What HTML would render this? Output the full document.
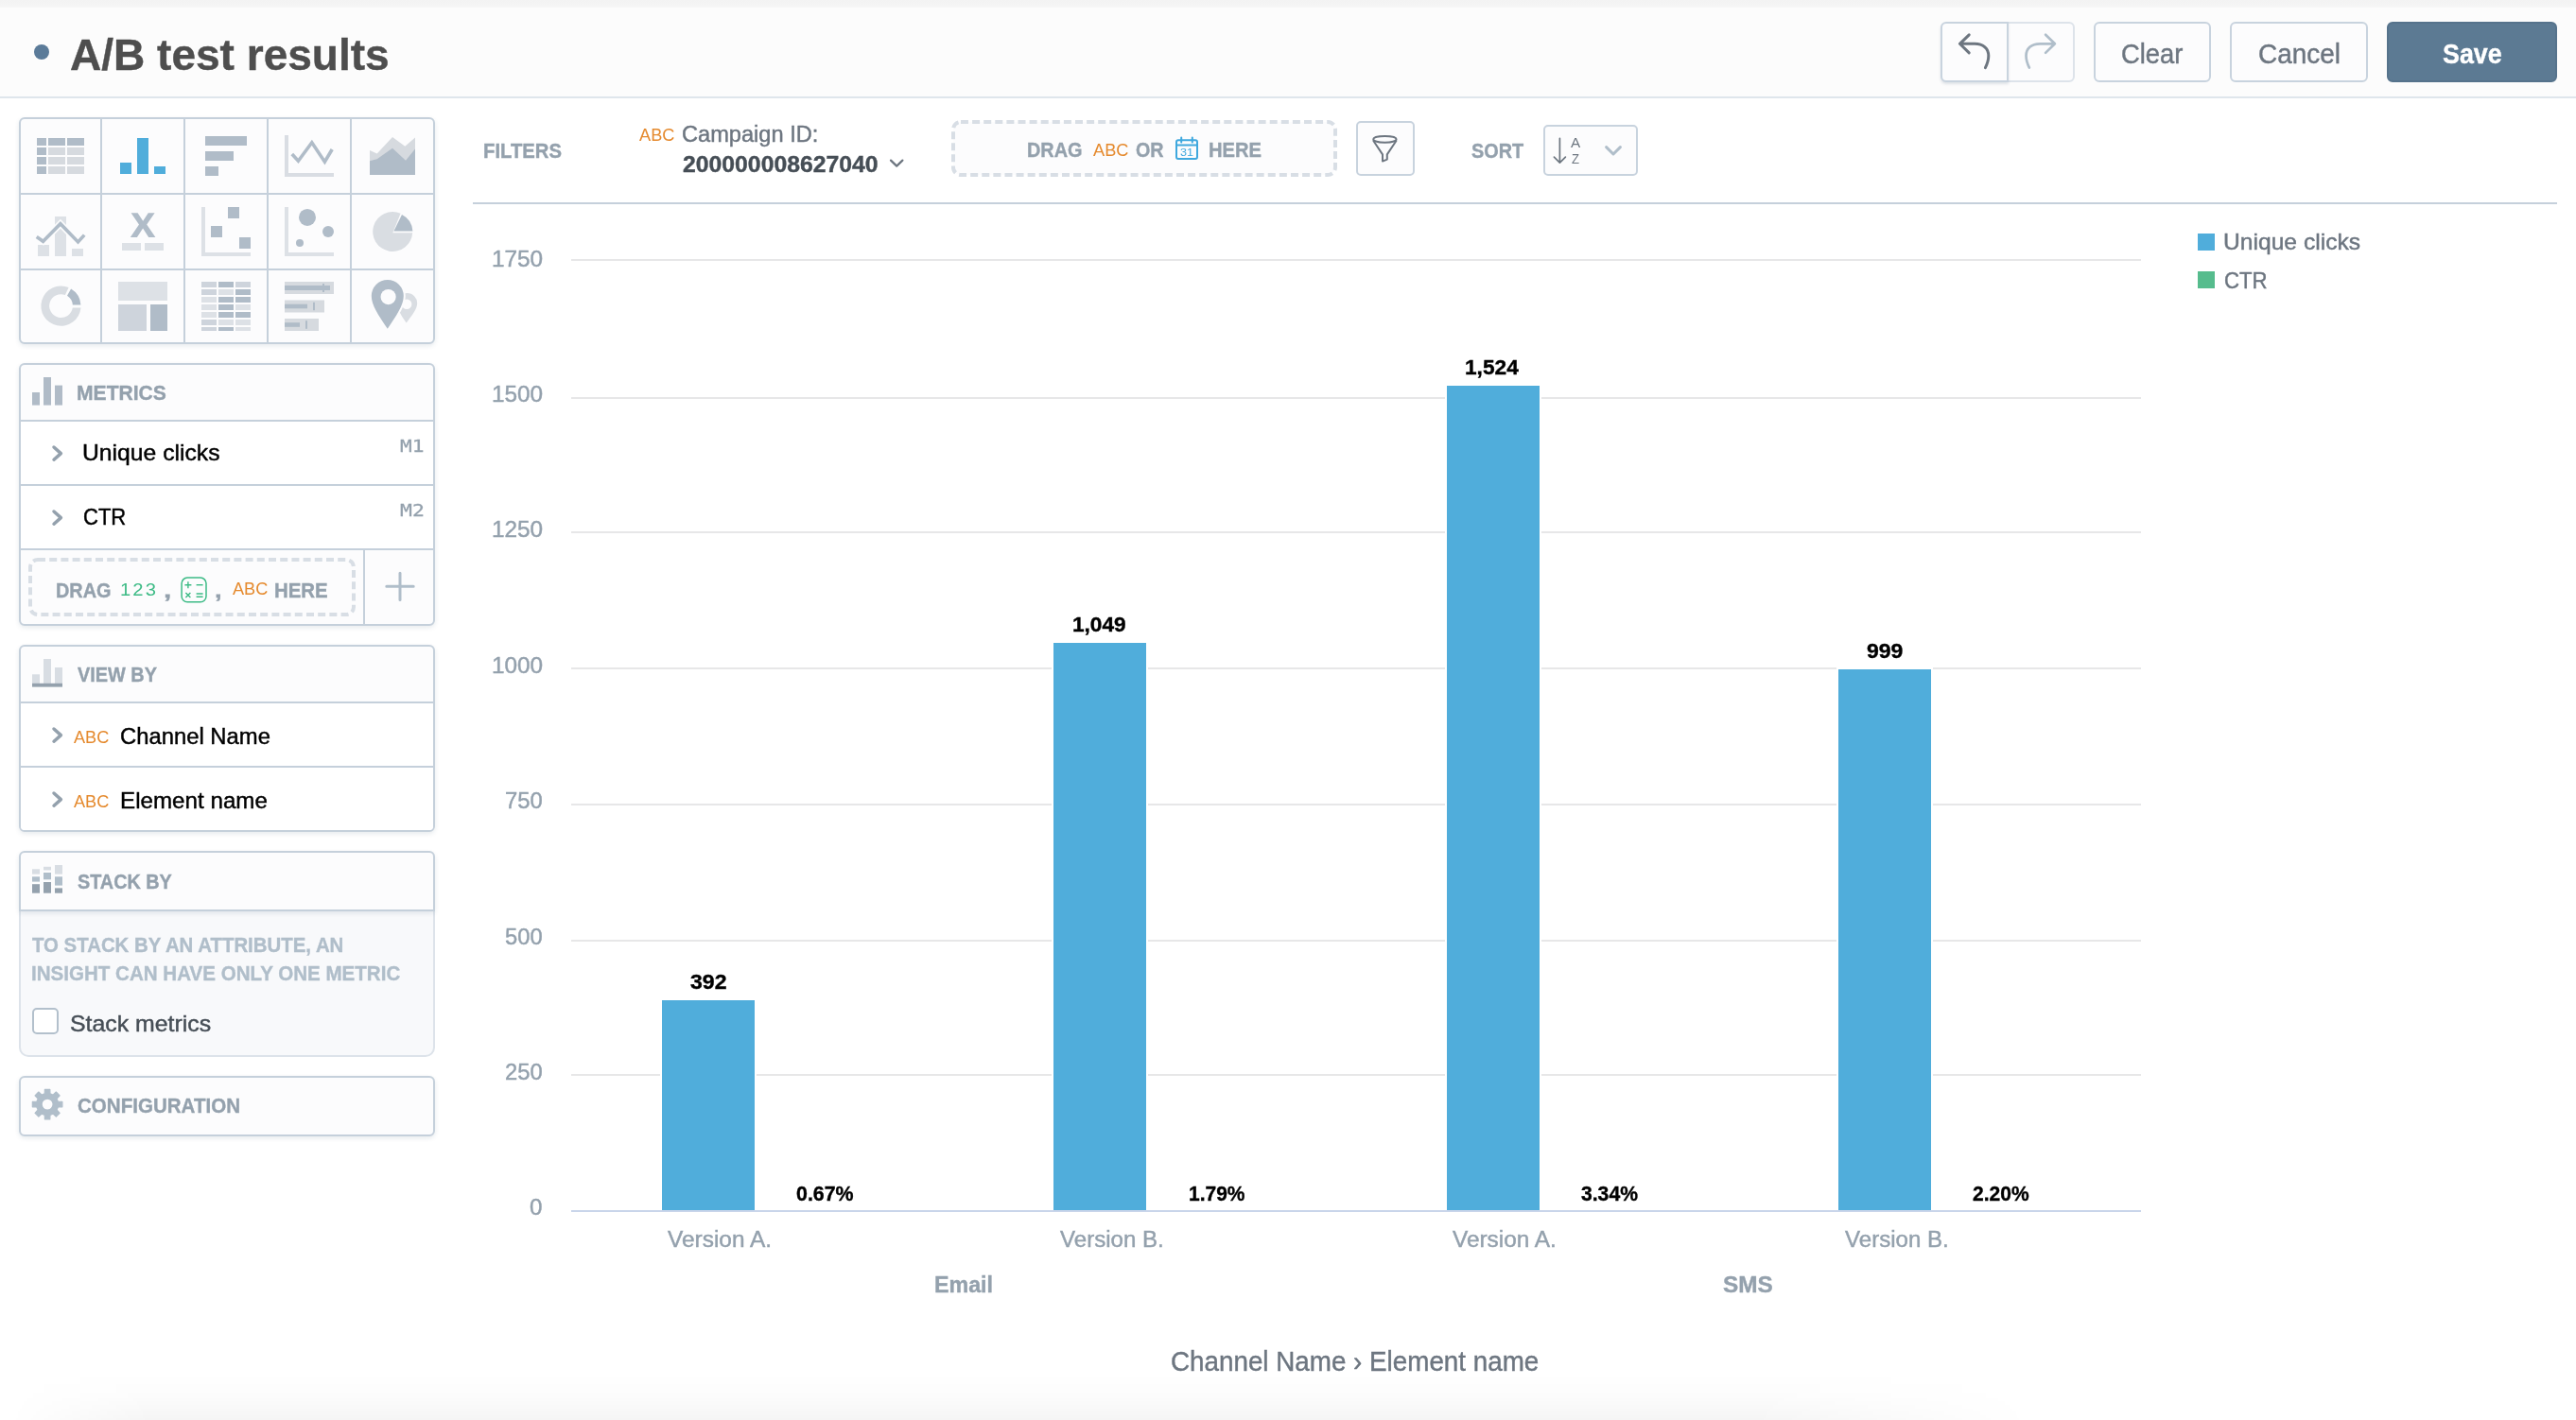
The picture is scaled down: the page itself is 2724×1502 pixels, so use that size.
<!DOCTYPE html>
<html lang="en"><head><meta charset="utf-8"><title>A/B test results</title>
<style>
html,body{margin:0;padding:0}
body{width:2724px;height:1502px;position:relative;overflow:hidden;background:#fff;font-family:'Liberation Sans',sans-serif}
.t{position:absolute;white-space:nowrap;line-height:1;transform-origin:0 0;z-index:5}
.b{position:absolute;box-sizing:border-box}
svg{position:absolute;overflow:visible}
header,aside,main,section,nav{display:block;position:static}
.strip{left:0;top:0;width:2724px;height:9px;background:linear-gradient(#f3f3f3,#f5f5f5 70%,#fafafa)}
.hdr{left:0;top:8px;width:2724px;height:96px;background:#fcfcfc;border-bottom:2px solid #dfe6ec}
.btn{top:23px;height:64px;border:2px solid #c8d3de;border-radius:6px;background:#fcfcfd}
.btn.dis{border-color:#dde3ea;border-radius:0 6px 6px 0}
.btn.sh{border-radius:6px 0 0 6px;box-shadow:0 2px 3px rgba(20,56,93,.13)}
.btn.save{background:#5c7a93;border-color:#56738c}
.panel{left:20px;width:440px;border:2px solid #c5d0db;border-radius:6px;background:#fcfcfd;box-shadow:0 2px 5px rgba(20,56,93,.10)}
.row{left:22px;width:436px;background:#fff}
.hl{left:22px;width:436px;height:2px;background:#c5d0db}
.vl{width:2px;background:#c5d0db}
.bullet{left:36px;top:47px;width:16px;height:16px;border-radius:50%;background:#5b7b99}
.fbtn{border:2px solid #c8d3de;border-radius:5px;background:#fcfcfd}
.chk{left:34px;top:1066px;width:28px;height:28px;border:2px solid #b3c0cc;border-radius:5px;background:#fff}
.fade{left:0;top:1452px;width:2200px;height:50px;background:linear-gradient(to bottom,rgba(0,0,0,0),rgba(0,0,0,.012) 50%,rgba(0,0,0,.04));-webkit-mask-image:linear-gradient(to right,rgba(0,0,0,0) 10px,#000 160px,#000 1850px,rgba(0,0,0,0) 2150px);mask-image:linear-gradient(to right,rgba(0,0,0,0) 10px,#000 160px,#000 1850px,rgba(0,0,0,0) 2150px)}
</style></head>
<body>
<div class="b strip"></div>
<header>
<div class="b hdr"></div>
<div class="b bullet"></div>
<div class="b btn dis" style="left:2122px;width:72px"></div>
<div class="b btn sh" style="left:2052px;width:72px"></div>
<div class="b btn" style="left:2214px;width:124px"></div>
<div class="b btn" style="left:2358px;width:146px"></div>
<div class="b btn save" style="left:2524px;width:180px"></div>
<svg style="left:2040px;top:14px" width="170" height="82" viewBox="2040 14 170 82" fill="none" stroke-linecap="round" stroke-linejoin="round">
<path d="M2082.2 36.8 L2072.4 46.3 L2082.2 55.9 M2072.8 46.3 H2088 C2097.5 46.3 2102.8 51.5 2102.8 59 C2102.8 63.5 2101.4 67.6 2099.4 71.6" stroke="#6d7680" stroke-width="3"/>
<path d="M2163.1 36.8 L2172.9 46.3 L2163.1 55.9 M2172.5 46.3 H2157.3 C2147.8 46.3 2142.5 51.5 2142.5 59 C2142.5 63.5 2143.9 67.6 2145.9 71.6" stroke="#b0beca" stroke-width="2.7"/>
</svg>
<span class="t" id="t0" style="left:73.60px;top:35.19px;font:700 46.97px/1 'Liberation Sans',sans-serif;color:#4e4e4e;-webkit-text-stroke:0.4px;transform:scaleX(0.9802);">A/B test results</span>
<span class="t" id="t1" style="left:2242.75px;top:41.99px;font:400 29.96px/1 'Liberation Sans',sans-serif;color:#6d7680;-webkit-text-stroke:0.45px;transform:scaleX(0.9143);">Clear</span>
<span class="t" id="t2" style="left:2387.72px;top:41.99px;font:400 29.96px/1 'Liberation Sans',sans-serif;color:#6d7680;-webkit-text-stroke:0.45px;transform:scaleX(0.9318);">Cancel</span>
<span class="t" id="t3" style="left:2582.76px;top:41.99px;font:700 29.96px/1 'Liberation Sans',sans-serif;color:#ffffff;-webkit-text-stroke:0.4px;transform:scaleX(0.8954);">Save</span>
</header>
<aside>
<section>
<div class="b panel" style="top:124px;height:240px"></div>
<div class="b vl" style="left:106px;top:126px;height:236px"></div>
<div class="b vl" style="left:194px;top:126px;height:236px"></div>
<div class="b vl" style="left:282px;top:126px;height:236px"></div>
<div class="b vl" style="left:370px;top:126px;height:236px"></div>
<div class="b hl" style="top:204px"></div>
<div class="b hl" style="top:284px"></div>
<svg style="left:0;top:0" width="480" height="370" viewBox="0 0 480 370">
<!-- table -->
<g fill="#b0bcc8"><rect x="39" y="146" width="10" height="8"/><rect x="51" y="146" width="18" height="8"/><rect x="71" y="146" width="18" height="8"/><rect x="39" y="156" width="10" height="8"/><rect x="39" y="166" width="10" height="8"/><rect x="39" y="176" width="10" height="8"/></g>
<g fill="#d6dadf"><rect x="51" y="156" width="18" height="8"/><rect x="71" y="156" width="18" height="8"/><rect x="51" y="166" width="18" height="8"/><rect x="71" y="166" width="18" height="8"/><rect x="51" y="176" width="18" height="8"/><rect x="71" y="176" width="18" height="8"/></g>
<!-- column (active) -->
<g fill="#50addb"><rect x="127" y="172" width="12" height="12"/><rect x="145" y="146" width="12" height="38"/><rect x="163" y="176" width="12" height="8"/></g>
<!-- bar -->
<g fill="#b0bcc8"><rect x="217" y="144" width="44" height="10"/><rect x="217" y="160" width="30" height="10"/><rect x="217" y="176" width="14" height="10"/></g>
<!-- line -->
<path d="M301 143 H305 V183 H353 V187 H301 Z" fill="#d9dde3"/>
<path d="M308.8 163.1 L315.4 170.2 L329.8 150.8 L343.4 171.2 L351.2 158" fill="none" stroke="#b0bcc8" stroke-width="3.6"/>
<!-- area -->
<path d="M391 159 L398.7 162.4 L415 145 L428.3 154.7 L439 145.6 V185 H391 Z" fill="#d6dadf"/>
<path d="M391 170.2 L398.7 168.2 L415 156.8 L429 169.8 L439 157.4 V185 H391 Z" fill="#b0bcc8"/>
<!-- combo -->
<g fill="#dde1e6"><rect x="40" y="259" width="12" height="12"/><rect x="58" y="229" width="12" height="42"/><rect x="76" y="263" width="12" height="8"/></g>
<path d="M38.7 250.5 L45.6 255.3 L63.9 236.7 L82.5 255.9 L89.2 248.6" fill="none" stroke="#fcfcfd" stroke-width="7"/>
<path d="M38.7 250.5 L45.6 255.3 L63.9 236.7 L82.5 255.9 L89.2 248.6" fill="none" stroke="#b0bcc8" stroke-width="3.6"/>
<!-- headline -->
<path d="M137.8 251 L147 237.6 L138.6 225.2 H145.6 L151.2 233.8 L156.8 225.2 H163.6 L155.2 237.6 L164.4 251 H157.2 L151.1 241.6 L144.9 251 Z" fill="#b0bcc8"/>
<g fill="#dde1e6"><rect x="129" y="257" width="20" height="8"/><rect x="153" y="257" width="20" height="8"/></g>
<!-- scatter -->
<path d="M213 219 H217 V267 H265 V271 H213 Z" fill="#dde1e6"/>
<g fill="#b0bcc8"><rect x="241" y="219" width="12" height="12"/><rect x="223" y="239" width="12" height="12"/><rect x="253" y="251" width="12" height="12"/></g>
<!-- bubble -->
<path d="M301 219 H305 V267 H353 V271 H301 Z" fill="#dde1e6"/>
<g fill="#b0bcc8"><circle cx="325" cy="229.9" r="9"/><circle cx="347" cy="245" r="6"/><circle cx="317" cy="256.9" r="4"/></g>
<!-- pie -->
<path d="M415.3 246.2 H436.2 A21 21 0 1 1 423.6 225.7 Z" fill="#d9dde2"/>
<path d="M416.4 244.6 L425 227 A21 21 0 0 1 436.4 244.6 Z" fill="#b0bcc8"/>
<!-- donut -->
<path d="M85.5 325.6 A21.1 21.1 0 1 1 72.6 304.1 L68.9 312 A12.4 12.4 0 1 0 76.8 325.6 Z" fill="#d9dde2"/>
<path d="M75.1 305.4 A21.1 21.1 0 0 1 85.4 322.6 H76.8 A12.4 12.4 0 0 0 71 312.8 Z" fill="#b0bcc8"/>
<!-- treemap -->
<rect x="125" y="298" width="52" height="20" fill="#dde1e6"/><rect x="125" y="322" width="30" height="28" fill="#ced4dc"/><rect x="159" y="322" width="18" height="28" fill="#b0bcc8"/>
<!-- heatmap -->
<rect x="213" y="298" width="16" height="6" fill="#ced4dc"/><rect x="231" y="298" width="16" height="6" fill="#b0bcc8"/><rect x="249" y="298" width="16" height="6" fill="#ced4dc"/><rect x="213" y="306" width="16" height="6" fill="#ced4dc"/><rect x="231" y="306" width="16" height="6" fill="#dde1e6"/><rect x="249" y="306" width="16" height="6" fill="#b0bcc8"/><rect x="213" y="314" width="16" height="6" fill="#dde1e6"/><rect x="231" y="314" width="16" height="6" fill="#b0bcc8"/><rect x="249" y="314" width="16" height="6" fill="#b0bcc8"/><rect x="213" y="322" width="16" height="6" fill="#dde1e6"/><rect x="231" y="322" width="16" height="6" fill="#b0bcc8"/><rect x="249" y="322" width="16" height="6" fill="#dde1e6"/><rect x="213" y="330" width="16" height="6" fill="#dde1e6"/><rect x="231" y="330" width="16" height="6" fill="#b0bcc8"/><rect x="249" y="330" width="16" height="6" fill="#b0bcc8"/><rect x="213" y="338" width="16" height="6" fill="#ced4dc"/><rect x="231" y="338" width="16" height="6" fill="#dde1e6"/><rect x="249" y="338" width="16" height="6" fill="#dde1e6"/><rect x="213" y="346" width="16" height="4" fill="#ced4dc"/><rect x="231" y="346" width="16" height="4" fill="#b0bcc8"/><rect x="249" y="346" width="16" height="4" fill="#dde1e6"/>
<!-- bullet -->
<g fill="#d6dadf"><rect x="301" y="298" width="52" height="13"/><rect x="301" y="317.5" width="42" height="13"/><rect x="301" y="337" width="36" height="13"/></g>
<g fill="#b0bcc8"><rect x="301" y="302" width="48" height="5"/><rect x="341" y="300" width="2" height="9"/><rect x="301" y="321.7" width="24" height="4.6"/><rect x="331" y="319.8" width="2" height="8.4"/><rect x="301" y="341.2" width="16" height="4.6"/><rect x="323" y="339.2" width="2" height="8.6"/></g>
<!-- geo pushpin -->
<path d="M429.7 341.6 C424 333 420 327 420 320.7 A10.6 10.6 0 0 1 441.2 320.7 C441.2 327 435.5 333.5 429.7 341.6 Z M430.1 327 A5.3 5.3 0 1 0 430.1 316.4 A5.3 5.3 0 0 0 430.1 327 Z" fill="#d9dde2" fill-rule="evenodd"/>
<path d="M409.8 347.7 C400 333 392.8 323 392.8 313 A17 17 0 0 1 426.8 313 C426.8 323 419.6 333 409.8 347.7 Z" fill="none" stroke="#fcfcfd" stroke-width="4"/>
<path d="M409.8 347.7 C400 333 392.8 323 392.8 313 A17 17 0 0 1 426.8 313 C426.8 323 419.6 333 409.8 347.7 Z" fill="#b0bcc8"/>
<circle cx="410.6" cy="314.1" r="8.1" fill="#fcfcfd"/>
</svg>

</section>
<section>
<div class="b panel" style="top:384px;height:278px"></div>
<div class="b hl" style="top:444px"></div>
<div class="b row" style="top:446px;height:66px"></div>
<div class="b hl" style="top:512px"></div>
<div class="b row" style="top:514px;height:66px"></div>
<div class="b hl" style="top:580px"></div>
<div class="b vl" style="left:384px;top:582px;height:78px"></div>
</section>
<section>
<div class="b panel" style="top:682px;height:198px"></div>
<div class="b hl" style="top:742px"></div>
<div class="b row" style="top:744px;height:66px"></div>
<div class="b hl" style="top:810px"></div>
<div class="b row" style="top:812px;height:66px;border-radius:0 0 4px 4px"></div>
</section>
<section>
<div class="b" style="left:20px;top:950px;width:440px;height:168px;border:2px solid #dde3ea;border-radius:0 0 10px 10px;background:#f8f9fb"></div>
<div class="b panel" style="top:900px;height:64px;border-radius:6px 6px 0 0"></div>
<div class="b chk"></div>
</section>
<section>
<div class="b panel" style="top:1138px;height:64px"></div>
</section>
<svg style="left:0;top:380px" width="480" height="830" viewBox="0 380 480 830" fill="none">
<!-- metrics icon -->
<g fill="#b0bbc7"><rect x="34" y="415" width="8" height="13.6"/><rect x="46" y="399" width="8" height="29.6"/><rect x="58" y="407.6" width="8" height="21"/></g>
<!-- row chevrons -->
<g stroke="#94a1ad" stroke-width="3.5" stroke-linecap="round" stroke-linejoin="round">
<path d="M57 473 L64.4 479.6 L57 486.2"/><path d="M57 541 L64.4 547.6 L57 554.2"/>
<path d="M57 771 L64.4 777.6 L57 784.2"/><path d="M57 839 L64.4 845.6 L57 852.2"/>
</g>
<!-- dashed drop zone -->
<rect x="32" y="592" width="342" height="58" rx="8" stroke="#d8dee5" stroke-width="4" stroke-dasharray="8 4.2" fill="#fcfcfd"/>
<!-- calculator icon -->
<rect x="192.1" y="611.1" width="25.9" height="25.7" rx="6" stroke="#3dbb86" stroke-width="1.5"/>
<g stroke="#3dbb86" stroke-width="1.4"><path d="M195.4 618.7 H202.4 M198.9 615.2 V622.2"/><path d="M207.6 618.7 H214.6"/><path d="M196.4 627.1 L201.4 632.1 M201.4 627.1 L196.4 632.1"/><path d="M207.6 628 H214.6 M207.6 631.3 H214.6"/></g>
<!-- plus -->
<path d="M408.8 620.3 H437.2 M423 606.2 V634.5" stroke="#b0beca" stroke-width="3" stroke-linecap="round"/>
<!-- view by icon -->
<g fill="#d8dde3"><rect x="34" y="713.3" width="8" height="10"/><rect x="46" y="697" width="8" height="26"/><rect x="58" y="706" width="8" height="17"/></g>
<rect x="34" y="722.8" width="32" height="3.8" fill="#94a1ad"/>
<!-- stack by icon -->
<g fill="#d8dde3"><rect x="34" y="919.3" width="8" height="5.3"/><rect x="46" y="916.8" width="8" height="3.6"/><rect x="58" y="915" width="8" height="9.6"/></g>
<g fill="#b0beca"><rect x="34" y="927.3" width="8" height="5.3"/><rect x="46" y="923" width="8" height="7.3"/><rect x="58" y="927.3" width="8" height="9.3"/></g>
<g fill="#94a1ad"><rect x="34" y="935.2" width="8" height="9.5"/><rect x="46" y="933" width="8" height="11.7"/><rect x="58" y="939.4" width="8" height="5.3"/></g>
<!-- gear -->
<path d="M47.23 1156.86 L47.39 1152.33 L52.81 1152.33 L52.97 1156.86 L56.02 1158.12 L59.34 1155.04 L63.16 1158.86 L60.08 1162.18 L61.34 1165.23 L65.87 1165.39 L65.87 1170.81 L61.34 1170.97 L60.08 1174.02 L63.16 1177.34 L59.34 1181.16 L56.02 1178.08 L52.97 1179.34 L52.81 1183.87 L47.39 1183.87 L47.23 1179.34 L44.18 1178.08 L40.86 1181.16 L37.04 1177.34 L40.12 1174.02 L38.86 1170.97 L34.33 1170.81 L34.33 1165.39 L38.86 1165.23 L40.12 1162.18 L37.04 1158.86 L40.86 1155.04 L44.18 1158.12 Z M44.10 1168.10 a6.0 6.0 0 1 0 12.0 0 a6.0 6.0 0 1 0 -12.0 0 Z" fill="#b0beca" fill-rule="evenodd" stroke="#b0beca" stroke-width="1.2" stroke-linejoin="round"/>
</svg>

<span class="t" id="t16" style="left:81.13px;top:404.36px;font:700 22.67px/1 'Liberation Sans',sans-serif;color:#94a1ad;-webkit-text-stroke:0.4px;transform:scaleX(0.9307);">METRICS</span>
<span class="t" id="t17" style="left:86.95px;top:467.43px;font:400 24.71px/1 'Liberation Sans',sans-serif;color:#000000;-webkit-text-stroke:0.45px;transform:scaleX(1.0002);">Unique clicks</span>
<span class="t" id="t18" style="left:422.88px;top:462.93px;font:400 18.43px/1 'DejaVu Sans Mono','Liberation Mono',monospace;color:#94a1ad;-webkit-text-stroke:0.3px;transform:scaleX(1.1525);">M1</span>
<span class="t" id="t19" style="left:87.76px;top:535.44px;font:400 24.71px/1 'Liberation Sans',sans-serif;color:#000000;-webkit-text-stroke:0.45px;transform:scaleX(0.8917);">CTR</span>
<span class="t" id="t20" style="left:422.87px;top:530.93px;font:400 18.43px/1 'DejaVu Sans Mono','Liberation Mono',monospace;color:#94a1ad;-webkit-text-stroke:0.3px;transform:scaleX(1.1656);">M2</span>
<span class="t" id="t21" style="left:58.58px;top:612.56px;font:700 22.67px/1 'Liberation Sans',sans-serif;color:#94a1ad;-webkit-text-stroke:0.4px;transform:scaleX(0.8767);">DRAG</span>
<span class="t" id="t22" style="left:127.02px;top:613.97px;font:400 19.19px/1 'Liberation Sans', sans-serif;color:#3dbb86;transform:scaleX(1.0529);letter-spacing:2px;">123</span>
<span class="t" id="t23" style="left:172.69px;top:612.56px;font:700 22.67px/1 'Liberation Sans',sans-serif;color:#94a1ad;-webkit-text-stroke:0.4px;transform:scaleX(1.3077);">,</span>
<span class="t" id="t24" style="left:227.31px;top:612.56px;font:700 22.67px/1 'Liberation Sans',sans-serif;color:#94a1ad;-webkit-text-stroke:0.4px;transform:scaleX(1.2118);">,</span>
<span class="t" id="t25" style="left:245.87px;top:614.28px;font:400 18.83px/1 'Liberation Sans', sans-serif;color:#e58a2e;transform:scaleX(0.9634);">ABC</span>
<span class="t" id="t26" style="left:290.35px;top:612.56px;font:700 22.67px/1 'Liberation Sans',sans-serif;color:#94a1ad;-webkit-text-stroke:0.4px;transform:scaleX(0.9015);">HERE</span>
<span class="t" id="t27" style="left:82.21px;top:702.16px;font:700 22.67px/1 'Liberation Sans',sans-serif;color:#94a1ad;-webkit-text-stroke:0.4px;transform:scaleX(0.8780);">VIEW BY</span>
<span class="t" id="t28" style="left:77.88px;top:769.97px;font:400 19.19px/1 'Liberation Sans', sans-serif;color:#e58a2e;transform:scaleX(0.9461);">ABC</span>
<span class="t" id="t29" style="left:127.48px;top:766.86px;font:400 24.21px/1 'Liberation Sans',sans-serif;color:#000000;-webkit-text-stroke:0.45px;transform:scaleX(0.9841);">Channel Name</span>
<span class="t" id="t30" style="left:77.88px;top:837.97px;font:400 19.19px/1 'Liberation Sans', sans-serif;color:#e58a2e;transform:scaleX(0.9461);">ABC</span>
<span class="t" id="t31" style="left:127.45px;top:835.43px;font:400 24.71px/1 'Liberation Sans',sans-serif;color:#000000;-webkit-text-stroke:0.45px;transform:scaleX(0.9790);">Element name</span>
<span class="t" id="t32" style="left:81.64px;top:920.56px;font:700 22.67px/1 'Liberation Sans',sans-serif;color:#94a1ad;-webkit-text-stroke:0.4px;transform:scaleX(0.8746);">STACK BY</span>
<span class="t" id="t33" style="left:34.08px;top:987.56px;font:700 22.67px/1 'Liberation Sans',sans-serif;color:#b0beca;-webkit-text-stroke:0.4px;transform:scaleX(0.9002);">TO STACK BY AN ATTRIBUTE, AN</span>
<span class="t" id="t34" style="left:32.96px;top:1017.56px;font:700 22.67px/1 'Liberation Sans',sans-serif;color:#b0beca;-webkit-text-stroke:0.4px;transform:scaleX(0.9074);">INSIGHT CAN HAVE ONLY ONE METRIC</span>
<span class="t" id="t35" style="left:73.72px;top:1071.03px;font:400 24.71px/1 'Liberation Sans',sans-serif;color:#464e56;-webkit-text-stroke:0.45px;transform:scaleX(1.0061);">Stack metrics</span>
<span class="t" id="t36" style="left:82.16px;top:1158.30px;font:700 22.97px/1 'Liberation Sans',sans-serif;color:#94a1ad;-webkit-text-stroke:0.4px;transform:scaleX(0.8949);">CONFIGURATION</span>
</aside>
<main>
<nav>
<div class="b" style="left:500px;top:214px;width:2204px;height:2px;background:#c5d0db"></div>
<div class="b fbtn" style="left:1434px;top:128px;width:62px;height:58px"></div>
<div class="b fbtn" style="left:1632px;top:132px;width:100px;height:54px"></div>
<svg style="left:490px;top:110px" width="1300" height="100" viewBox="490 110 1300 100" fill="none">
<rect x="1008" y="129" width="404" height="56" rx="8" stroke="#d8dee5" stroke-width="4" stroke-dasharray="8 4.1" fill="#fcfcfd"/>
<!-- dropdown chevron -->
<path d="M942 169.6 L948.2 175.6 L954.4 169.6" stroke="#6d7680" stroke-width="2.2" stroke-linecap="round" stroke-linejoin="round"/>
<!-- calendar -->
<g stroke="#3fa8de" stroke-width="2" stroke-linecap="round" stroke-linejoin="round"><rect x="1244" y="148.2" width="22" height="19.8" rx="2"/><path d="M1244 153.6 H1266 M1249.2 145.4 V150.4 M1260.8 145.4 V150.4"/></g>
<!-- funnel -->
<g stroke="#6d7680" stroke-width="2" stroke-linejoin="round" stroke-linecap="round"><ellipse cx="1464.4" cy="147.3" rx="12.2" ry="3.4"/><path d="M1452.4 149 L1462 163.4 V170.6 L1466.8 168.6 V163.4 L1476.4 149"/></g>
<!-- sort icon -->
<g stroke="#6d7680" stroke-width="1.7" stroke-linecap="round" stroke-linejoin="round"><path d="M1649.4 146.4 V172 M1643.4 166.2 L1649.4 172.2 L1655.4 166.2"/></g>
<path d="M1698.6 155.6 L1706 163 L1713.4 155.6" stroke="#b0beca" stroke-width="3" stroke-linecap="round" stroke-linejoin="round"/>
</svg>

<span class="t" id="t4" style="left:511.38px;top:147.96px;font:700 22.67px/1 'Liberation Sans',sans-serif;color:#94a1ad;-webkit-text-stroke:0.4px;transform:scaleX(0.8947);">FILTERS</span>
<span class="t" id="t5" style="left:675.69px;top:134.02px;font:400 18.9px/1 'Liberation Sans', sans-serif;color:#e58a2e;transform:scaleX(0.9625);">ABC</span>
<span class="t" id="t6" style="left:721.49px;top:130.14px;font:400 24.35px/1 'Liberation Sans',sans-serif;color:#6d7680;-webkit-text-stroke:0.45px;transform:scaleX(0.9700);">Campaign ID:</span>
<span class="t" id="t7" style="left:721.76px;top:162.14px;font:700 24.35px/1 'Liberation Sans',sans-serif;color:#464e56;-webkit-text-stroke:0.4px;transform:scaleX(1.0173);">200000008627040</span>
<span class="t" id="t8" style="left:1086.40px;top:146.96px;font:700 22.67px/1 'Liberation Sans',sans-serif;color:#94a1ad;-webkit-text-stroke:0.4px;transform:scaleX(0.8770);">DRAG</span>
<span class="t" id="t9" style="left:1155.70px;top:149.17px;font:400 19.19px/1 'Liberation Sans', sans-serif;color:#e58a2e;transform:scaleX(0.9479);">ABC</span>
<span class="t" id="t10" style="left:1201.38px;top:146.96px;font:700 22.67px/1 'Liberation Sans',sans-serif;color:#94a1ad;-webkit-text-stroke:0.4px;transform:scaleX(0.8708);">OR</span>
<span class="t" id="t11" style="left:1277.56px;top:146.96px;font:700 22.67px/1 'Liberation Sans',sans-serif;color:#94a1ad;-webkit-text-stroke:0.4px;transform:scaleX(0.8897);">HERE</span>
<span class="t" id="t12" style="left:1556.49px;top:148.30px;font:700 22.97px/1 'Liberation Sans',sans-serif;color:#94a1ad;-webkit-text-stroke:0.4px;transform:scaleX(0.8642);">SORT</span>
<span class="t" id="t13" style="left:1248.01px;top:156.93px;font:400 10.47px/1 'Liberation Sans', sans-serif;color:#3fa8de;transform:scaleX(1.2052);">31</span>
<span class="t" id="t14" style="left:1660.68px;top:143.48px;font:400 15.03px/1 'Liberation Sans', sans-serif;color:#6d7680;transform:scaleX(1.0153);">A</span>
<span class="t" id="t15" style="left:1661.95px;top:162.41px;font:400 13.95px/1 'Liberation Sans', sans-serif;color:#6d7680;transform:scaleX(0.9400);">Z</span>
</nav>
<section>
<svg style="left:480px;top:216px" width="2244" height="1286" viewBox="480 216 2244 1286">
<g fill="#e7e7e8"><rect x="604" y="274" width="1660" height="2"/><rect x="604" y="420" width="1660" height="2"/><rect x="604" y="562" width="1660" height="2"/><rect x="604" y="706" width="1660" height="2"/><rect x="604" y="850" width="1660" height="2"/><rect x="604" y="994" width="1660" height="2"/><rect x="604" y="1136" width="1660" height="2"/></g>
<g fill="#ffffff"><rect x="698" y="1056" width="102" height="224"/><rect x="1112" y="678" width="102" height="602"/><rect x="1528" y="406" width="102" height="874"/><rect x="1942" y="706" width="102" height="574"/></g>
<g fill="#50addb"><rect x="700" y="1058" width="98" height="222"/><rect x="1114" y="680" width="98" height="600"/><rect x="1530" y="408" width="98" height="872"/><rect x="1944" y="708" width="98" height="572"/></g>
<rect x="604" y="1280" width="1660" height="2" fill="#c9d5ea"/>
<rect x="2324" y="247" width="18" height="18" fill="#50addb"/><rect x="2324" y="287" width="18" height="18" fill="#56bc8d"/>
</svg>
<span class="t" id="t37" style="left:560.48px;top:1265.23px;font:400 24.71px/1 'Liberation Sans',sans-serif;color:#94a1ad;-webkit-text-stroke:0.45px;transform:scaleX(0.9786);">0</span>
<span class="t" id="t38" style="left:534.32px;top:1122.44px;font:400 24.71px/1 'Liberation Sans',sans-serif;color:#94a1ad;-webkit-text-stroke:0.45px;transform:scaleX(0.9632);">250</span>
<span class="t" id="t39" style="left:534.42px;top:978.64px;font:400 24.71px/1 'Liberation Sans',sans-serif;color:#94a1ad;-webkit-text-stroke:0.45px;transform:scaleX(0.9607);">500</span>
<span class="t" id="t40" style="left:534.31px;top:834.84px;font:400 24.71px/1 'Liberation Sans',sans-serif;color:#94a1ad;-webkit-text-stroke:0.45px;transform:scaleX(0.9635);">750</span>
<span class="t" id="t41" style="left:519.81px;top:692.03px;font:400 24.71px/1 'Liberation Sans',sans-serif;color:#94a1ad;-webkit-text-stroke:0.45px;transform:scaleX(0.9855);">1000</span>
<span class="t" id="t42" style="left:519.81px;top:548.23px;font:400 24.71px/1 'Liberation Sans',sans-serif;color:#94a1ad;-webkit-text-stroke:0.45px;transform:scaleX(0.9855);">1250</span>
<span class="t" id="t43" style="left:519.81px;top:405.43px;font:400 24.71px/1 'Liberation Sans',sans-serif;color:#94a1ad;-webkit-text-stroke:0.45px;transform:scaleX(0.9855);">1500</span>
<span class="t" id="t44" style="left:519.81px;top:261.63px;font:400 24.71px/1 'Liberation Sans',sans-serif;color:#94a1ad;-webkit-text-stroke:0.45px;transform:scaleX(0.9855);">1750</span>
<span class="t" id="t45" style="left:729.51px;top:1026.56px;font:700 22.67px/1 'Liberation Sans',sans-serif;color:#000000;-webkit-text-stroke:0.4px;transform:scaleX(1.0179);">392</span>
<span class="t" id="t46" style="left:1133.72px;top:648.56px;font:700 22.67px/1 'Liberation Sans',sans-serif;color:#000000;-webkit-text-stroke:0.4px;transform:scaleX(0.9986);">1,049</span>
<span class="t" id="t47" style="left:1549.25px;top:377.16px;font:700 22.67px/1 'Liberation Sans',sans-serif;color:#000000;-webkit-text-stroke:0.4px;transform:scaleX(1.0014);">1,524</span>
<span class="t" id="t48" style="left:1973.54px;top:676.56px;font:700 22.67px/1 'Liberation Sans',sans-serif;color:#000000;-webkit-text-stroke:0.4px;transform:scaleX(1.0163);">999</span>
<span class="t" id="t49" style="left:841.74px;top:1250.56px;font:700 22.67px/1 'Liberation Sans',sans-serif;color:#000000;-webkit-text-stroke:0.4px;transform:scaleX(0.9437);">0.67%</span>
<span class="t" id="t50" style="left:1256.59px;top:1250.56px;font:700 22.67px/1 'Liberation Sans',sans-serif;color:#000000;-webkit-text-stroke:0.4px;transform:scaleX(0.9255);">1.79%</span>
<span class="t" id="t51" style="left:1672.34px;top:1250.56px;font:700 22.67px/1 'Liberation Sans',sans-serif;color:#000000;-webkit-text-stroke:0.4px;transform:scaleX(0.9327);">3.34%</span>
<span class="t" id="t52" style="left:2085.86px;top:1250.56px;font:700 22.67px/1 'Liberation Sans',sans-serif;color:#000000;-webkit-text-stroke:0.4px;transform:scaleX(0.9279);">2.20%</span>
<span class="t" id="t53" style="left:705.81px;top:1298.76px;font:400 24.79px/1 'Liberation Sans',sans-serif;color:#94a1ad;-webkit-text-stroke:0.45px;transform:scaleX(0.9864);">Version A.</span>
<span class="t" id="t54" style="left:1120.65px;top:1298.76px;font:400 24.79px/1 'Liberation Sans',sans-serif;color:#94a1ad;-webkit-text-stroke:0.45px;transform:scaleX(0.9718);">Version B.</span>
<span class="t" id="t55" style="left:1535.65px;top:1298.76px;font:400 24.79px/1 'Liberation Sans',sans-serif;color:#94a1ad;-webkit-text-stroke:0.45px;transform:scaleX(0.9842);">Version A.</span>
<span class="t" id="t56" style="left:1950.65px;top:1298.76px;font:400 24.79px/1 'Liberation Sans',sans-serif;color:#94a1ad;-webkit-text-stroke:0.45px;transform:scaleX(0.9718);">Version B.</span>
<span class="t" id="t57" style="left:988.01px;top:1346.61px;font:700 24.5px/1 'Liberation Sans',sans-serif;color:#94a1ad;-webkit-text-stroke:0.4px;transform:scaleX(0.9492);">Email</span>
<span class="t" id="t58" style="left:1822.36px;top:1346.61px;font:700 24.5px/1 'Liberation Sans',sans-serif;color:#94a1ad;-webkit-text-stroke:0.4px;transform:scaleX(0.9928);">SMS</span>
<span class="t" id="t59" style="left:1238.13px;top:1425.00px;font:400 29.94px/1 'Liberation Sans',sans-serif;color:#6d7680;-webkit-text-stroke:0.45px;transform:scaleX(0.9283);">Channel Name › Element name</span>
<span class="t" id="t60" style="left:2351.16px;top:244.03px;font:400 24.71px/1 'Liberation Sans',sans-serif;color:#6d7680;-webkit-text-stroke:0.45px;transform:scaleX(0.9969);">Unique clicks</span>
<span class="t" id="t61" style="left:2351.72px;top:284.84px;font:400 24.71px/1 'Liberation Sans',sans-serif;color:#6d7680;-webkit-text-stroke:0.45px;transform:scaleX(0.8985);">CTR</span>
</section>
</main>
<div class="b fade"></div>

</body></html>
